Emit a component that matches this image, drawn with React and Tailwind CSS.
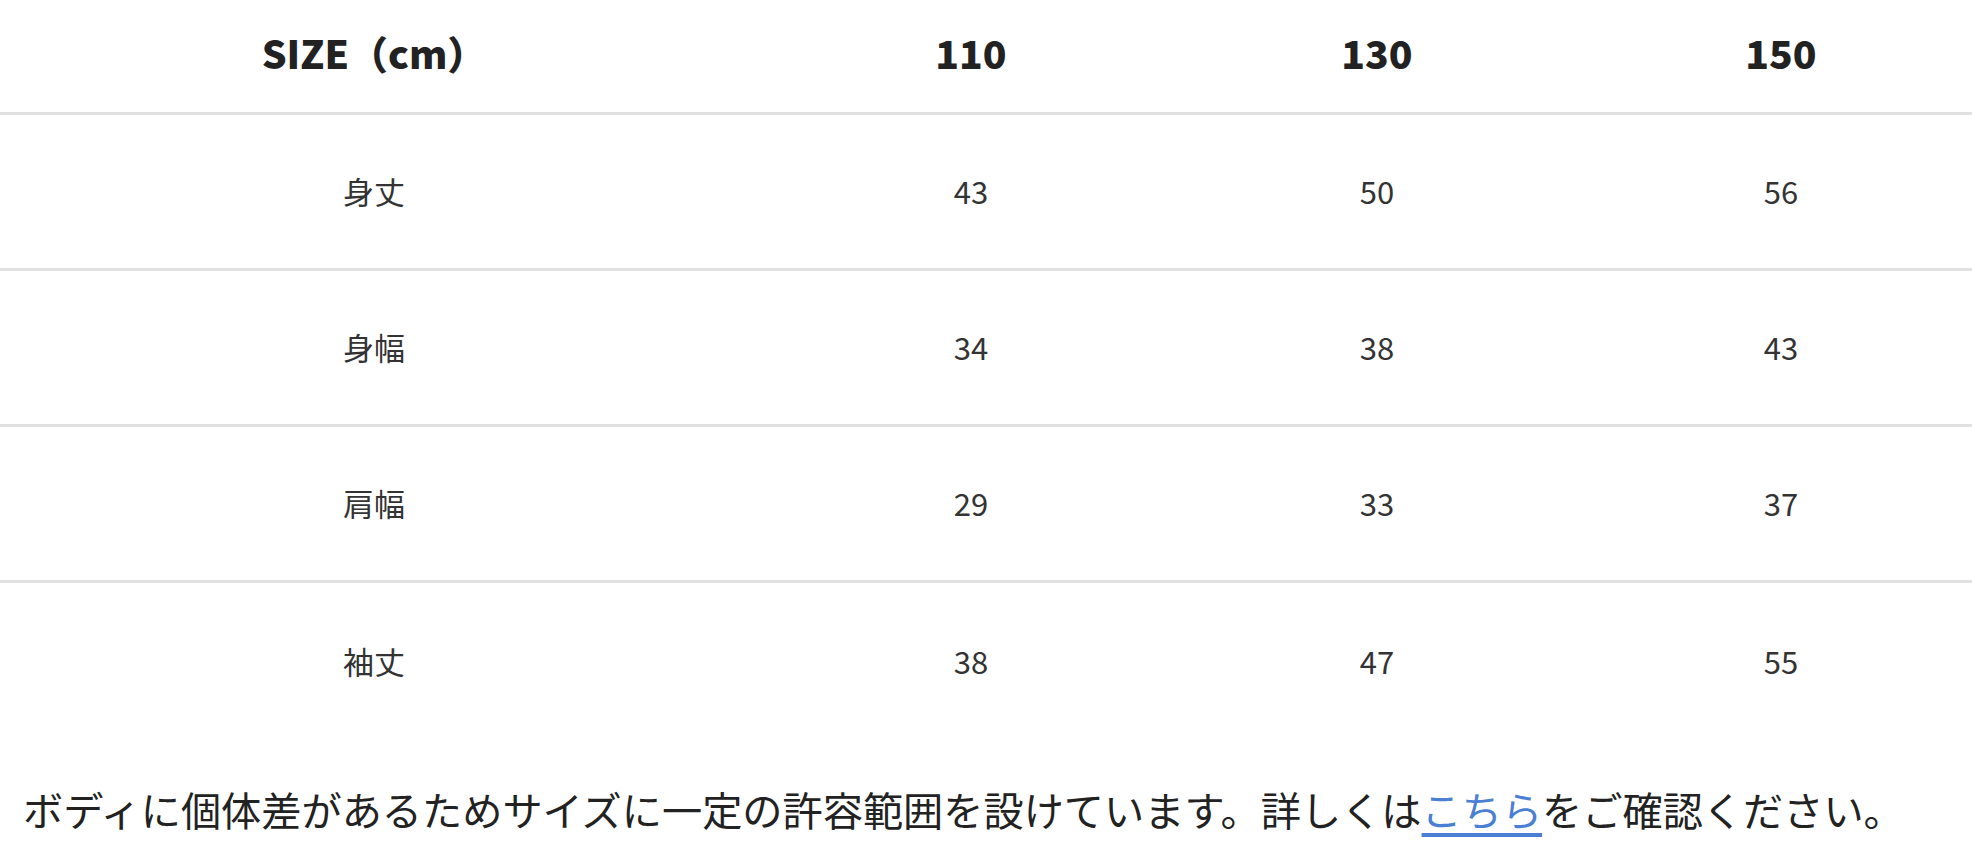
import React from "react";

const rows = [
  ["身丈", "43", "50", "56"],
  ["身幅", "34", "38", "43"],
  ["肩幅", "29", "33", "37"],
  ["袖丈", "38", "47", "55"],
];

const font = { fontFamily: '"Noto Sans CJK JP", "Noto Sans", sans-serif' };

export default function App() {
  return (
    <div className="w-full overflow-hidden bg-white text-[#333]" style={font}>
      <div className="w-[2002px]">
        <div className="grid grid-cols-[748px_446px_366px_442px] h-[115px] pb-[8px] border-b-[3px] border-[#e0e0e0] items-center text-center text-[39px] font-black text-[#222]">
          <div>SIZE（cm）</div>
          <div>110</div>
          <div>130</div>
          <div>150</div>
        </div>
        {rows.map((r, i) => (
          <div
            key={r[0]}
            className={
              i < rows.length - 1
                ? "grid grid-cols-[748px_446px_366px_442px] h-[156px] border-b-[3px] border-[#e0e0e0] items-center text-center text-[31px]"
                : "grid grid-cols-[748px_446px_366px_442px] h-[156px] items-center text-center text-[31px]"
            }
          >
            {r.map((c, j) => (
              <div key={j}>{c}</div>
            ))}
          </div>
        ))}
      </div>
      <p className="mt-[40px] pl-[23px] text-[40.2px] leading-[60px] text-[#222] whitespace-nowrap">
        ボディに個体差があるためサイズに一定の許容範囲を設けています。詳しくは
        <a href="#" className="text-[#4a7fd4] underline decoration-[4px] underline-offset-[7px]">こちら</a>
        をご確認ください。
      </p>
    </div>
  );
}
